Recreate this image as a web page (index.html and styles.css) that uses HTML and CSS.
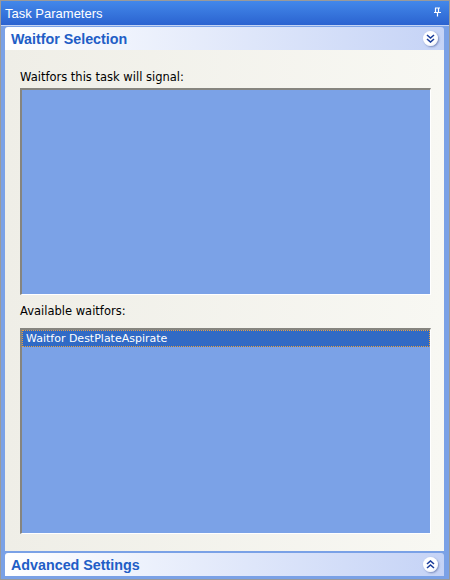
FILE: index.html
```html
<!DOCTYPE html>
<html lang="en">
<head>
  <meta charset="UTF-8">
  <title>Task Parameters</title>
  <link rel="stylesheet" href="styles.css">
</head>
<body>
  <div class="ventana">
    <div class="titulo">
      <span>Task Parameters</span>
      <svg class="pin" width="9" height="10" viewBox="0 0 9 10">
        <path d="M2 1h5M2.5 1v4.5M5.5 1v4.5M1 5.5h7M4.5 5.5v4" stroke="#fff" stroke-width="1.2" fill="none"/>
      </svg>
    </div>

    <div class="cuerpo">
      <div class="grupo-head">
        <span>Waitfor Selection</span>
        <span class="boton">
          <svg width="9" height="9" viewBox="0 0 9 9">
            <path d="M1 1l3.5 3 3.5-3M1 5l3.5 3 3.5-3" stroke="#1c3e9c" stroke-width="1.6" fill="none"/>
          </svg>
        </span>
      </div>

      <div class="grupo-contenido">
        <div class="etiqueta">Waitfors this task will signal:</div>
        <div class="lista"></div>

        <div class="etiqueta segunda">Available waitfors:</div>
        <div class="lista">
          <div class="item seleccionado">Waitfor DestPlateAspirate</div>
        </div>
      </div>

      <div class="grupo-head abajo">
        <span>Advanced Settings</span>
        <span class="boton">
          <svg width="9" height="9" viewBox="0 0 9 9">
            <path d="M1 4l3.5-3 3.5 3M1 8l3.5-3 3.5 3" stroke="#1c3e9c" stroke-width="1.6" fill="none"/>
          </svg>
        </span>
      </div>
    </div>
  </div>
</body>
</html>
```

FILE: styles.css
```css
body {
  margin: 0;
  font-family: 'Liberation Sans', Arial, sans-serif;
}

.ventana {
  width: 450px;
  height: 580px;
  box-sizing: border-box;
  border: 1px solid #9a9a9a;
  display: flex;
  flex-direction: column;
}

.titulo {
  height: 24px;
  background: linear-gradient(#4388ea, #2b63d0);
  border-bottom: 1px solid #c4d4f4;
  color: #fff;
  font-size: 13px;
  display: flex;
  align-items: center;
  justify-content: space-between;
  padding: 0 7px 0 4px;
}

.pin {
  margin-top: -2px;
}

.cuerpo {
  flex: 1;
  background: #7aa1e6;
  padding: 1px 5px 3px 4px;
  display: flex;
  flex-direction: column;
}

.grupo-head {
  height: 23px;
  background: linear-gradient(to right, #ffffff, #c5d3f6);
  border-radius: 3px 3px 0 0;
  color: #215dc6;
  font-weight: bold;
  font-size: 14.3px;
  display: flex;
  align-items: center;
  justify-content: space-between;
  padding: 0 6px 0 6px;
}

.abajo {
  margin-top: 2px;
}

.boton {
  width: 15px;
  height: 15px;
  border-radius: 50%;
  background: radial-gradient(circle at 40% 35%, #ffffff 55%, #dfe4f2);
  box-shadow: 1px 1px 2px rgba(60, 80, 140, 0.55);
  display: flex;
  align-items: center;
  justify-content: center;
}

.grupo-contenido {
  flex: 1;
  background: linear-gradient(to right, #efeee7, #f8f8f3);
  padding: 19px 13px 17px 15px;
  display: flex;
  flex-direction: column;
}

.etiqueta {
  font-family: 'DejaVu Sans', Verdana, sans-serif;
  font-size: 11.5px;
  color: #000;
  line-height: 16px;
  margin-bottom: 3px;
}

.segunda {
  margin-top: 8px;
  margin-bottom: 9px;
}

.lista {
  flex: 1;
  background: #7ba2e7;
  border-style: solid;
  border-width: 2px 1px 1px 2px;
  border-color: #86857f #ffffff #ffffff #86857f;
}

.item {
  font-family: 'DejaVu Sans', Verdana, sans-serif;
  font-size: 11px;
  line-height: 15px;
  color: #fff;
  padding: 0 3px;
}

.seleccionado {
  background: #316ac5;
  border: 1px dotted #e8a040;
}
```
